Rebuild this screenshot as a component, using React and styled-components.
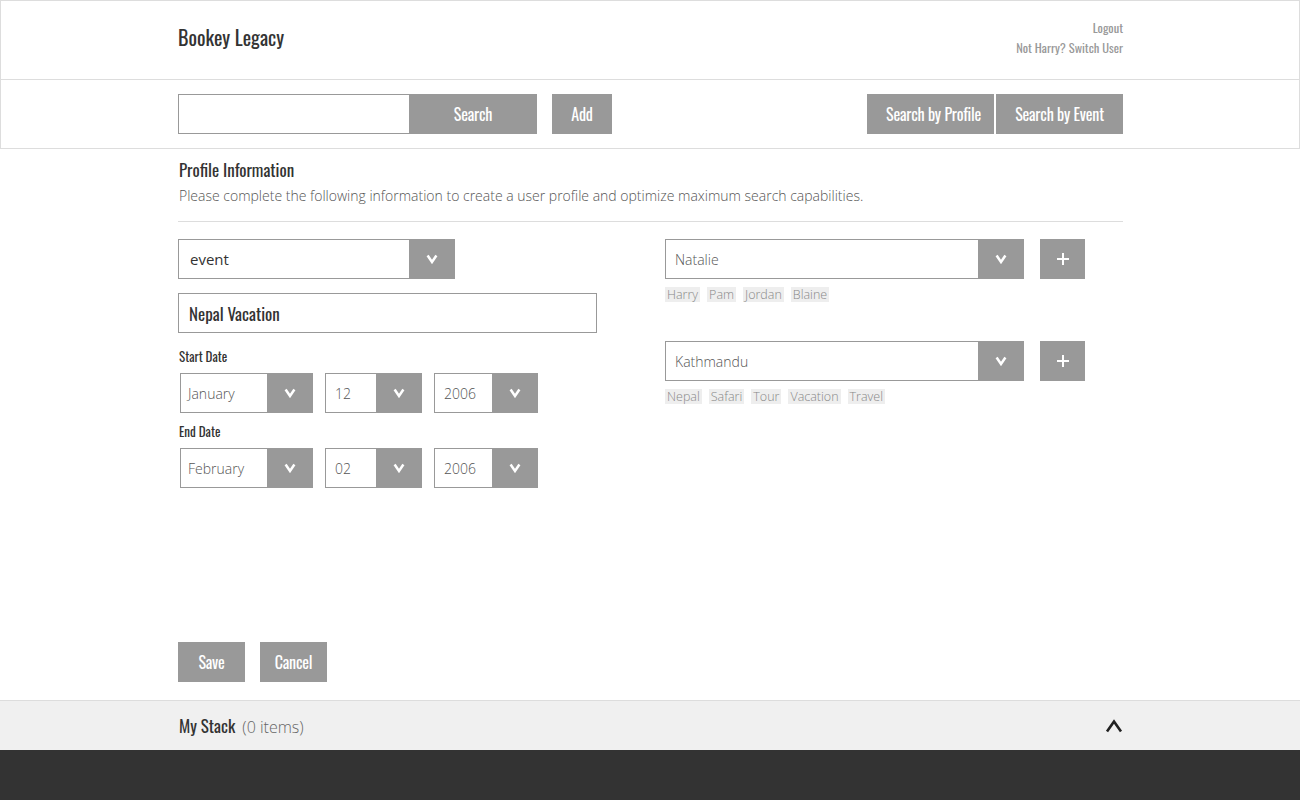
import React from "react";
import styled, { createGlobalStyle } from "styled-components";

const Global = createGlobalStyle`
  html, body { margin: 0; padding: 0; background: #fff; }
  body { font-family: "Open Sans", "Liberation Sans", sans-serif; color: #333; }
  * { box-sizing: border-box; }
`;

const COND = `"Oswald", "Liberation Sans Narrow", "DejaVu Sans Condensed", sans-serif`;

const Page = styled.div`
  min-height: 100vh;
  display: flex;
  flex-direction: column;
`;

const TopBox = styled.div`
  border: 1px solid #ddd;
`;

const Container = styled.div`
  width: 945px;
  margin-left: ${(p) => (p.$inset ? 177 : 178)}px;
`;

const Header = styled.header`
  height: 79px;
  border-bottom: 1px solid #ddd;
`;

const HeaderInner = styled(Container)`
  height: 100%;
  display: flex;
  align-items: center;
  justify-content: space-between;
`;

const Brand = styled.div`
  font-family: ${COND};
  font-size: 20px;
  color: #333;
  margin-top: -7px;
`;

const UserLinks = styled.div`
  display: flex;
  flex-direction: column;
  align-items: flex-end;
  gap: 4px;
  font-family: ${COND};
  font-size: 12.5px;
  color: #999;
  margin-top: -4px;
  line-height: 16px;
`;

const SearchBar = styled.div`
  height: 68px;
`;

const SearchInner = styled(Container)`
  height: 100%;
  display: flex;
  align-items: center;
  justify-content: space-between;
`;

const Group = styled.div`
  display: flex;
  align-items: center;
  gap: ${(p) => p.$gap || 0}px;
`;

const TextBox = styled.div`
  width: ${(p) => p.$w}px;
  height: 40px;
  border: 1px solid #999;
  border-right: ${(p) => (p.$joined ? "none" : "1px solid #999")};
  background: #fff;
  display: flex;
  align-items: center;
  padding-left: 10px;
  font-family: ${COND};
  font-size: 17px;
  color: #333;
`;

const Button = styled.div`
  width: ${(p) => p.$w}px;
  height: 40px;
  background: #999;
  color: #fff;
  font-family: ${COND};
  font-weight: 400;
  font-size: 16px;
  letter-spacing: -0.2px;
  display: flex;
  align-items: center;
  justify-content: center;
  padding-left: ${(p) => p.$pl || 0}px;
  padding-bottom: 1px;
`;

const Main = styled.main`
  flex: 1;
  display: flex;
  flex-direction: column;
`;

const MainInner = styled(Container)`
  flex: 1;
  padding-top: 10px;
  display: flex;
  flex-direction: column;
`;

const Title = styled.h2`
  margin: 0 0 0 1px;
  font-family: ${COND};
  font-weight: 400;
  font-size: 17px;
  line-height: 22px;
  color: #333;
`;

const Subtitle = styled.p`
  margin: 5px 0 0 1px;
  font-size: 14px;
  font-weight: 300;
  color: #555;
  line-height: 20px;
`;

const Rule = styled.hr`
  border: none;
  border-top: 1px solid #ddd;
  margin: 15px 0 17px;
`;

const Columns = styled.div`
  display: flex;
`;

const LeftCol = styled.div`
  width: 487px;
  display: flex;
  flex-direction: column;
`;

const RightCol = styled.div`
  display: flex;
  flex-direction: column;
`;

const SelectWrap = styled.div`
  width: ${(p) => p.$w}px;
  height: 40px;
  display: flex;
  border: 1px solid #999;
  background: #fff;
`;

const SelectText = styled.div`
  flex: 1;
  display: flex;
  align-items: center;
  padding-left: ${(p) => p.$pl || 9}px;
  font-size: ${(p) => p.$fs || 14}px;
  font-weight: ${(p) => p.$fw || 300};
  color: ${(p) => p.$c || "#555"};
`;

const SelectBtn = styled.div`
  width: 46px;
  margin: -1px -1px -1px 0;
  background: #999;
  display: flex;
  align-items: center;
  justify-content: center;
`;

const Spacer = styled.div`
  height: ${(p) => p.$h}px;
`;

const Label = styled.div`
  font-family: ${COND};
  font-size: 13px;
  color: #333;
  line-height: 18px;
  margin: ${(p) => p.$m};
`;

const DateRow = styled.div`
  display: flex;
  gap: 12px;
  padding-left: 2px;
`;

const PlusBtn = styled.div`
  width: 45px;
  height: 40px;
  background: #999;
  display: flex;
  align-items: center;
  justify-content: center;
`;

const Tags = styled.div`
  display: flex;
  gap: 7px;
  margin-top: 8px;
`;

const Tag = styled.span`
  background: #eee;
  color: #888;
  font-size: 12.5px;
  font-weight: 300;
  line-height: 15px;
  padding: 0 2px;
`;

const Actions = styled.div`
  display: flex;
  gap: 15px;
  margin-top: auto;
  margin-bottom: 18px;
`;

const StackBar = styled.div`
  height: 50px;
  background: #f0f0f0;
  border-top: 1px solid #ddd;
`;

const StackInner = styled(Container)`
  height: 100%;
  display: flex;
  align-items: center;
  justify-content: space-between;
`;

const StackTitle = styled.div`
  display: flex;
  align-items: baseline;
  gap: 7px;
  margin-left: 1px;
  margin-top: -1px;
  font-family: ${COND};
  font-size: 17px;
  color: #333;
`;

const StackCount = styled.span`
  font-family: "Open Sans", sans-serif;
  font-weight: 300;
  font-size: 16px;
  color: #666;
`;

const Footer = styled.footer`
  height: 50px;
  background: #333;
`;

const Chevron = () => (
  <svg width="12" height="10" viewBox="0 0 12 10">
    <polyline points="1.6,1.5 6,8 10.4,1.5" fill="none" stroke="#fff" strokeWidth="2.5" />
  </svg>
);

const Plus = () => (
  <svg width="14" height="14" viewBox="0 0 14 14">
    <path d="M7 1v12M1 7h12" stroke="#fff" strokeWidth="2" />
  </svg>
);

const Caret = () => (
  <svg width="18" height="14" viewBox="0 0 18 14">
    <polyline points="2,12.5 9,2.5 16,12.5" fill="none" stroke="#222" strokeWidth="2.6" />
  </svg>
);

const Select = ({ w, children, ...t }) => (
  <SelectWrap $w={w}>
    <SelectText {...t}>{children}</SelectText>
    <SelectBtn>
      <Chevron />
    </SelectBtn>
  </SelectWrap>
);

const DateSelects = ({ m, d, y }) => (
  <DateRow>
    <Select w={133} $pl={7}>{m}</Select>
    <Select w={97} $pl={9}>{d}</Select>
    <Select w={104} $pl={9}>{y}</Select>
  </DateRow>
);

export default function App() {
  return (
    <Page>
      <Global />
      <TopBox>
        <Header>
          <HeaderInner $inset>
            <Brand>Bookey Legacy</Brand>
            <UserLinks>
              <span>Logout</span>
              <span>Not Harry? Switch User</span>
            </UserLinks>
          </HeaderInner>
        </Header>
        <SearchBar>
          <SearchInner $inset>
            <Group $gap={15}>
              <Group>
                <TextBox $w={231} $joined />
                <Button $w={128}>Search</Button>
              </Group>
              <Button $w={60}>Add</Button>
            </Group>
            <Group $gap={2}>
              <Button $w={127} $pl={6}>Search by Profile</Button>
              <Button $w={127}>Search by Event</Button>
            </Group>
          </SearchInner>
        </SearchBar>
      </TopBox>
      <Main>
        <MainInner>
          <Title>Profile Information</Title>
          <Subtitle>
            Please complete the following information to create a user profile and optimize maximum search capabilities.
          </Subtitle>
          <Rule />
          <Columns>
            <LeftCol>
              <Select w={277} $pl={11} $fs={15} $fw={400} $c="#333">event</Select>
              <Spacer $h={14} />
              <TextBox $w={419}>Nepal Vacation</TextBox>
              <Label $m="14px 0 8px 1px">Start Date</Label>
              <DateSelects m="January" d="12" y="2006" />
              <Label $m="9px 0 8px 1px">End Date</Label>
              <DateSelects m="February" d="02" y="2006" />
            </LeftCol>
            <RightCol>
              <Group $gap={16}>
                <Select w={359}>Natalie</Select>
                <PlusBtn><Plus /></PlusBtn>
              </Group>
              <Tags>
                <Tag>Harry</Tag>
                <Tag>Pam</Tag>
                <Tag>Jordan</Tag>
                <Tag>Blaine</Tag>
              </Tags>
              <Spacer $h={39} />
              <Group $gap={16}>
                <Select w={359}>Kathmandu</Select>
                <PlusBtn><Plus /></PlusBtn>
              </Group>
              <Tags>
                <Tag>Nepal</Tag>
                <Tag>Safari</Tag>
                <Tag>Tour</Tag>
                <Tag>Vacation</Tag>
                <Tag>Travel</Tag>
              </Tags>
            </RightCol>
          </Columns>
          <Actions>
            <Button $w={67}>Save</Button>
            <Button $w={67}>Cancel</Button>
          </Actions>
        </MainInner>
      </Main>
      <StackBar>
        <StackInner>
          <StackTitle>
            My Stack <StackCount>(0 items)</StackCount>
          </StackTitle>
          <Caret />
        </StackInner>
      </StackBar>
      <Footer />
    </Page>
  );
}
